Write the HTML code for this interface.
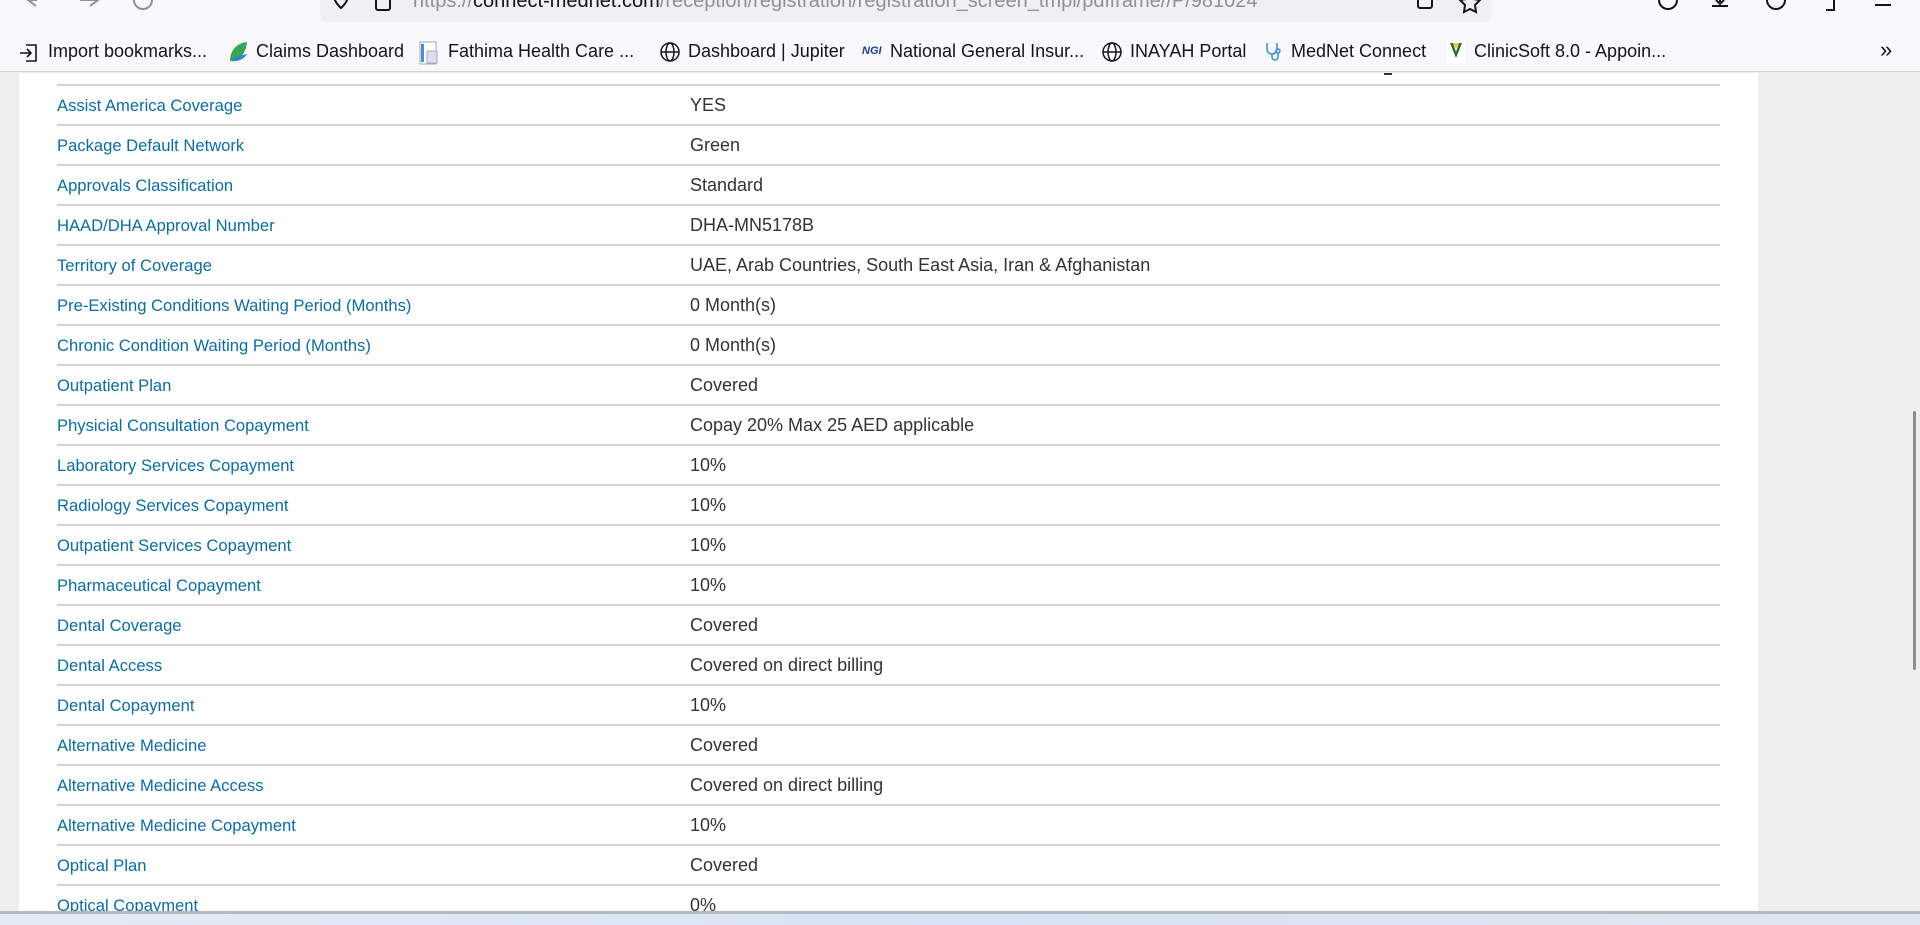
<!DOCTYPE html>
<html><head><meta charset="utf-8"><style>
*{margin:0;padding:0;box-sizing:border-box}
body{width:1920px;height:925px;overflow:hidden;background:#eeeeee;font-family:"Liberation Sans",Arial,sans-serif;position:relative}
.tb{position:absolute;left:0;top:0;width:1920px;height:72px;background:#f9f9fb;border-bottom:1px solid #d0d0d6;z-index:2}
.url{position:absolute;left:320px;top:-20px;width:1172px;height:42px;background:#f0f0f4;border-radius:8px}
.urltext{position:absolute;left:413px;top:-10px;font-size:20px;color:#8f8f9d;white-space:nowrap}
.urltext b{font-weight:normal;color:#15141a}
.bm{position:absolute;top:41px;font-size:18px;color:#15141a;white-space:nowrap}
.ic{position:absolute;top:41px}
.panel{position:absolute;left:19px;top:73px;width:1739px;height:840px;background:#fff}
.row{position:absolute;left:57px;width:1663px;height:40px;border-top:2px solid #d2d2d2}
.row .l{position:absolute;left:0;top:10px;color:#0e6c9e;font-size:16.6px}
.row .v{position:absolute;left:633px;top:9px;color:#333;font-size:18px}
.sb{position:absolute;left:1913px;top:411px;width:3px;height:259px;background:#8f8f8f;border-radius:2px}
.task{position:absolute;left:0;top:911px;width:1920px;height:14px;background:linear-gradient(90deg,#e4ecf6,#d6e2f5,#e0e6f0);border-top:3px solid #b5b8bd}
</style></head><body>
<div class="tb">
 <div class="url"></div>
 <div class="urltext">https://<b>connect-mednet.com</b>/reception/registration/registration_screen_tmpl/pdfframe//P/981024</div>
 <svg style="position:absolute;left:0;top:0" width="1920" height="24" fill="none" stroke="#8f8f9d" stroke-width="2">
  <path d="M28 0 L37 0 M36 -6 L28 0 L36 6"/>
  <path d="M80 0 L98 0 M90 -6 L98 0 L90 6"/>
  <circle cx="143" cy="0" r="9"/>
  <path d="M334 -4 a7 7 0 0 1 14 0 c0 6-7 12-7 12 s-7-6-7-12z" stroke="#15141a"/>
  <rect x="376" y="-4" width="14" height="14" rx="2" stroke="#15141a"/>
  <rect x="1418" y="-6" width="14" height="14" rx="2" stroke="#15141a"/>
  <path d="M1470 -8 l3 7 7 1 -5 5 1 7 -6 -3 -6 3 1 -7 -5 -5 7 -1z" stroke="#15141a"/>
  <circle cx="1668" cy="0" r="9" stroke="#15141a"/>
  <path d="M1712 6 h16 M1720 -6 v8 M1716 0 l4 4 4-4" stroke="#15141a"/>
  <circle cx="1776" cy="0" r="9" stroke="#15141a"/>
  <path d="M1826 -4 h8 v14 h-8" stroke="#15141a"/>
  <path d="M1875 -2 h16 M1875 5 h16" stroke="#15141a"/>
 </svg>
 <svg class="ic" style="left:18px;top:42px" width="22" height="22" fill="none" stroke="#15141a" stroke-width="1.6"><path d="M8 3 h10 v16 h-10 M2 11 h11 M9 7 l4 4 -4 4"/></svg>
 <div class="bm" style="left:48px">Import bookmarks...</div>
 <svg class="ic" style="left:228px" width="20" height="22"><path d="M2 20 C2 8 10 2 19 1 C18 12 12 20 2 20z" fill="#3aa655"/><path d="M2 20 C8 16 14 14 19 13 C16 19 8 21 2 20z" fill="#2a88c8"/></svg>
 <div class="bm" style="left:256px">Claims Dashboard</div>
 <svg class="ic" style="left:419px" width="22" height="24"><rect x="1" y="1" width="16" height="22" fill="#fff" stroke="#9ab"/><rect x="2" y="3" width="3" height="18" fill="#4a8fd0"/><rect x="8" y="10" width="10" height="12" fill="#dde" stroke="#aab"/></svg>
 <div class="bm" style="left:448px">Fathima Health Care ...</div>
 <svg class="ic" style="left:659px" width="22" height="22" fill="none" stroke="#15141a" stroke-width="1.5"><circle cx="11" cy="11" r="9"/><ellipse cx="11" cy="11" rx="4" ry="9"/><path d="M2 11h18"/></svg>
 <div class="bm" style="left:688px">Dashboard | Jupiter</div>
 <div class="bm" style="left:862px;top:45px;font-size:11px;font-weight:bold;font-style:italic;color:#1c3c8c">NGI</div>
 <div class="bm" style="left:890px">National General Insur...</div>
 <svg class="ic" style="left:1101px" width="22" height="22" fill="none" stroke="#15141a" stroke-width="1.5"><circle cx="11" cy="11" r="9"/><ellipse cx="11" cy="11" rx="4" ry="9"/><path d="M2 11h18"/></svg>
 <div class="bm" style="left:1130px">INAYAH Portal</div>
 <svg class="ic" style="left:1264px" width="20" height="22" fill="none" stroke="#3a8fd0" stroke-width="1.5"><path d="M3 2 v6 a5 5 0 0 0 10 0 v-6 M8 13 v3 a3 3 0 0 0 6 0 v-4"/><circle cx="14" cy="10" r="2"/></svg>
 <div class="bm" style="left:1291px">MedNet Connect</div>
 <svg class="ic" style="left:1447px;top:40px" width="18" height="24"><rect width="18" height="24" fill="#fff"/><path d="M3 3 L9 18 L15 3 L12 3 L9 12 L6 3z" fill="#3a6a2a"/><path d="M6 3 h6 l-3 6z" fill="#c8d82a"/></svg>
 <div class="bm" style="left:1474px">ClinicSoft 8.0 - Appoin...</div>
 <div class="bm" style="left:1880px;font-size:22px;top:37px">»</div>
</div>
<div class="panel"></div>
<div style="position:absolute;left:1384px;top:73px;width:8px;height:2px;background:#333"></div>
<div class="row" style="top:84px"><span class="l">Assist America Coverage</span><span class="v">YES</span></div>
<div class="row" style="top:124px"><span class="l">Package Default Network</span><span class="v">Green</span></div>
<div class="row" style="top:164px"><span class="l">Approvals Classification</span><span class="v">Standard</span></div>
<div class="row" style="top:204px"><span class="l">HAAD/DHA Approval Number</span><span class="v">DHA-MN5178B</span></div>
<div class="row" style="top:244px"><span class="l">Territory of Coverage</span><span class="v">UAE, Arab Countries, South East Asia, Iran &amp; Afghanistan</span></div>
<div class="row" style="top:284px"><span class="l">Pre-Existing Conditions Waiting Period (Months)</span><span class="v">0 Month(s)</span></div>
<div class="row" style="top:324px"><span class="l">Chronic Condition Waiting Period (Months)</span><span class="v">0 Month(s)</span></div>
<div class="row" style="top:364px"><span class="l">Outpatient Plan</span><span class="v">Covered</span></div>
<div class="row" style="top:404px"><span class="l">Physicial Consultation Copayment</span><span class="v">Copay 20% Max 25 AED applicable</span></div>
<div class="row" style="top:444px"><span class="l">Laboratory Services Copayment</span><span class="v">10%</span></div>
<div class="row" style="top:484px"><span class="l">Radiology Services Copayment</span><span class="v">10%</span></div>
<div class="row" style="top:524px"><span class="l">Outpatient Services Copayment</span><span class="v">10%</span></div>
<div class="row" style="top:564px"><span class="l">Pharmaceutical Copayment</span><span class="v">10%</span></div>
<div class="row" style="top:604px"><span class="l">Dental Coverage</span><span class="v">Covered</span></div>
<div class="row" style="top:644px"><span class="l">Dental Access</span><span class="v">Covered on direct billing</span></div>
<div class="row" style="top:684px"><span class="l">Dental Copayment</span><span class="v">10%</span></div>
<div class="row" style="top:724px"><span class="l">Alternative Medicine</span><span class="v">Covered</span></div>
<div class="row" style="top:764px"><span class="l">Alternative Medicine Access</span><span class="v">Covered on direct billing</span></div>
<div class="row" style="top:804px"><span class="l">Alternative Medicine Copayment</span><span class="v">10%</span></div>
<div class="row" style="top:844px"><span class="l">Optical Plan</span><span class="v">Covered</span></div>
<div class="row" style="top:884px"><span class="l">Optical Copayment</span><span class="v">0%</span></div>
<div class="sb"></div>
<div class="task"></div>
</body></html>
